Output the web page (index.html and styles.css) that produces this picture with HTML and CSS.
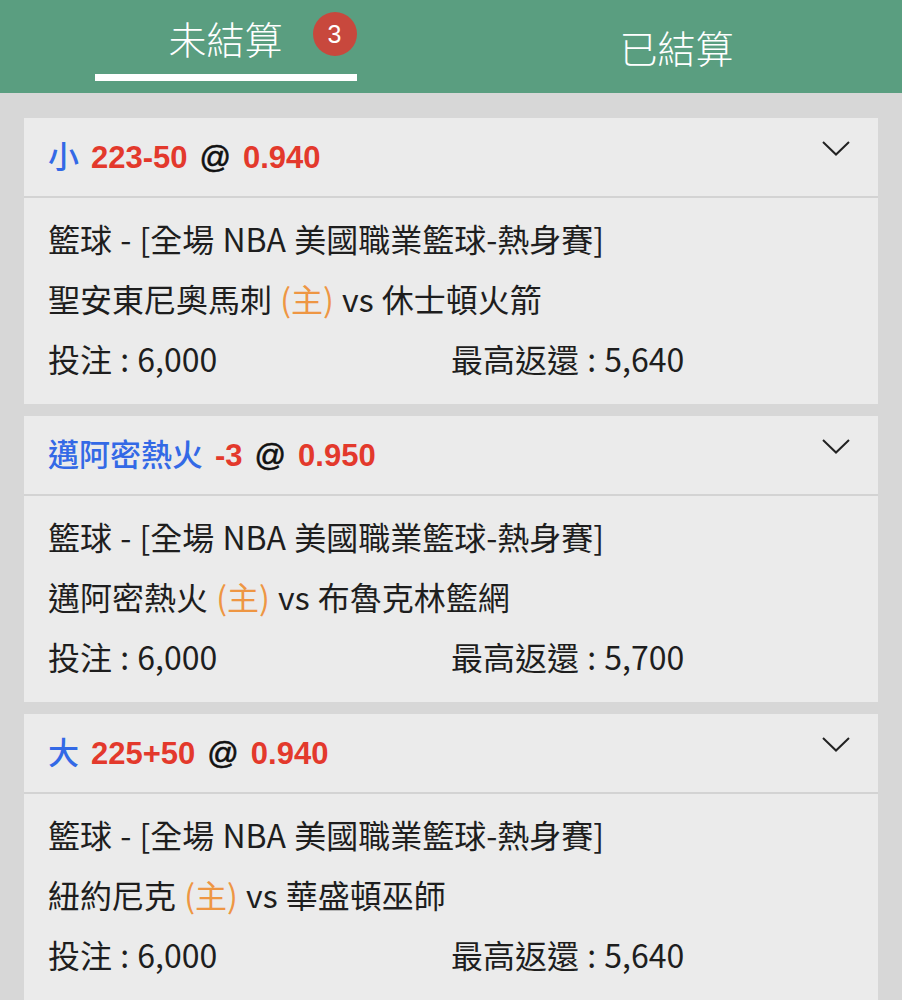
FILE: index.html
```html
<!DOCTYPE html>
<html lang="zh-Hant">
<head>
    <meta charset="UTF-8">
    <meta name="viewport" content="width=device-width, initial-scale=1.0">
    <title>注單</title>
    <link rel="stylesheet" href="styles.css">
</head>
<body>
    <header class="tabs">
        <div class="tab tab-active">
            <span class="tab-label">未結算<span class="badge">3</span></span>
            <span class="tab-bar"></span>
        </div>
        <div class="tab">
            <span class="tab-label">已結算</span>
        </div>
    </header>

    <main class="bets">
        <section class="bet">
            <div class="bet-head">
                <div class="bet-title">
                    <span class="pick">小</span>
                    <span class="odds">223-50</span>
                    <span class="at">@</span>
                    <span class="odds">0.940</span>
                </div>
                <svg class="chevron" width="28" height="15" viewBox="0 0 28 15"><path d="M1 1 L14 13.5 L27 1" fill="none" stroke="#222" stroke-width="2"/></svg>
            </div>
            <div class="bet-body">
                <div class="row">籃球 - [全場 NBA 美國職業籃球-熱身賽]</div>
                <div class="row">聖安東尼奧馬刺 <span class="home">(主)</span> vs 休士頓火箭</div>
                <div class="row cols">
                    <span>投注 : 6,000</span>
                    <span>最高返還 : 5,640</span>
                </div>
            </div>
        </section>

        <section class="bet">
            <div class="bet-head">
                <div class="bet-title">
                    <span class="pick">邁阿密熱火</span>
                    <span class="odds">-3</span>
                    <span class="at">@</span>
                    <span class="odds">0.950</span>
                </div>
                <svg class="chevron" width="28" height="15" viewBox="0 0 28 15"><path d="M1 1 L14 13.5 L27 1" fill="none" stroke="#222" stroke-width="2"/></svg>
            </div>
            <div class="bet-body">
                <div class="row">籃球 - [全場 NBA 美國職業籃球-熱身賽]</div>
                <div class="row">邁阿密熱火 <span class="home">(主)</span> vs 布魯克林籃網</div>
                <div class="row cols">
                    <span>投注 : 6,000</span>
                    <span>最高返還 : 5,700</span>
                </div>
            </div>
        </section>

        <section class="bet">
            <div class="bet-head">
                <div class="bet-title">
                    <span class="pick">大</span>
                    <span class="odds">225+50</span>
                    <span class="at">@</span>
                    <span class="odds">0.940</span>
                </div>
                <svg class="chevron" width="28" height="15" viewBox="0 0 28 15"><path d="M1 1 L14 13.5 L27 1" fill="none" stroke="#222" stroke-width="2"/></svg>
            </div>
            <div class="bet-body">
                <div class="row">籃球 - [全場 NBA 美國職業籃球-熱身賽]</div>
                <div class="row">紐約尼克 <span class="home">(主)</span> vs 華盛頓巫師</div>
                <div class="row cols">
                    <span>投注 : 6,000</span>
                    <span>最高返還 : 5,640</span>
                </div>
            </div>
        </section>
    </main>
</body>
</html>
```

FILE: styles.css
```css
:root {
    --green: #5a9e80;
    --page-bg: #d7d7d7;
    --card-bg: #ebebeb;
    --line: #d3d3d3;
    --text: #1e1e1e;
    --blue: #3369e6;
    --red: #e3392c;
    --orange: #ee9643;
    --badge: #c8483d;
}

* {
    margin: 0;
    padding: 0;
    box-sizing: border-box;
}

body {
    background-color: var(--page-bg);
    color: var(--text);
    font-family: "Noto Sans CJK TC", "Noto Sans CJK SC", sans-serif;
    min-height: 100vh;
}

.tabs {
    display: grid;
    grid-template-columns: 1fr 1fr;
    height: 93px;
    background-color: var(--green);
    color: #ffffff;
}

.tab {
    display: flex;
    flex-direction: column;
    align-items: center;
    justify-content: center;
}

.tab-active {
    justify-content: flex-start;
    padding-top: 19px;
}

.tab-label {
    position: relative;
    font-size: 38px;
    line-height: 38px;
    font-weight: 300;
}

.tab-bar {
    width: 262px;
    height: 7px;
    margin-top: 17px;
    background-color: #ffffff;
}

.badge {
    position: absolute;
    left: calc(100% + 30px);
    top: -7px;
    width: 44px;
    height: 44px;
    border-radius: 50%;
    background-color: var(--badge);
    font-family: "Liberation Sans", sans-serif;
    font-size: 25px;
    line-height: 44px;
    text-align: center;
    color: #ffffff;
}

.bets {
    display: flex;
    flex-direction: column;
    gap: 12px;
    padding: 25px 24px 0;
}

.bet {
    background-color: var(--card-bg);
}

.bet-head {
    display: flex;
    justify-content: space-between;
    align-items: center;
    height: 80px;
    padding: 0 28px 5px 24px;
    border-bottom: 2px solid var(--line);
}

.bet-title {
    display: flex;
    align-items: baseline;
    gap: 12px;
    font-family: "Liberation Sans", "Noto Sans CJK TC", sans-serif;
    font-size: 31px;
    font-weight: bold;
}

.pick {
    color: var(--blue);
    font-family: "Noto Sans CJK TC", sans-serif;
    font-weight: 500;
}

.odds {
    color: var(--red);
}

.at {
    color: #111111;
    font-weight: normal;
    -webkit-text-stroke: 0.6px #111111;
}

.chevron {
    align-self: flex-start;
    margin-top: 23px;
}

.bet-body {
    padding: 10px 24px 16px;
    font-size: 32px;
    font-weight: 400;
    word-spacing: 1px;
}

.row {
    height: 60px;
    line-height: 60px;
    white-space: nowrap;
}

.cols {
    display: grid;
    grid-template-columns: 1fr 1fr;
}

.home {
    color: var(--orange);
}
```
